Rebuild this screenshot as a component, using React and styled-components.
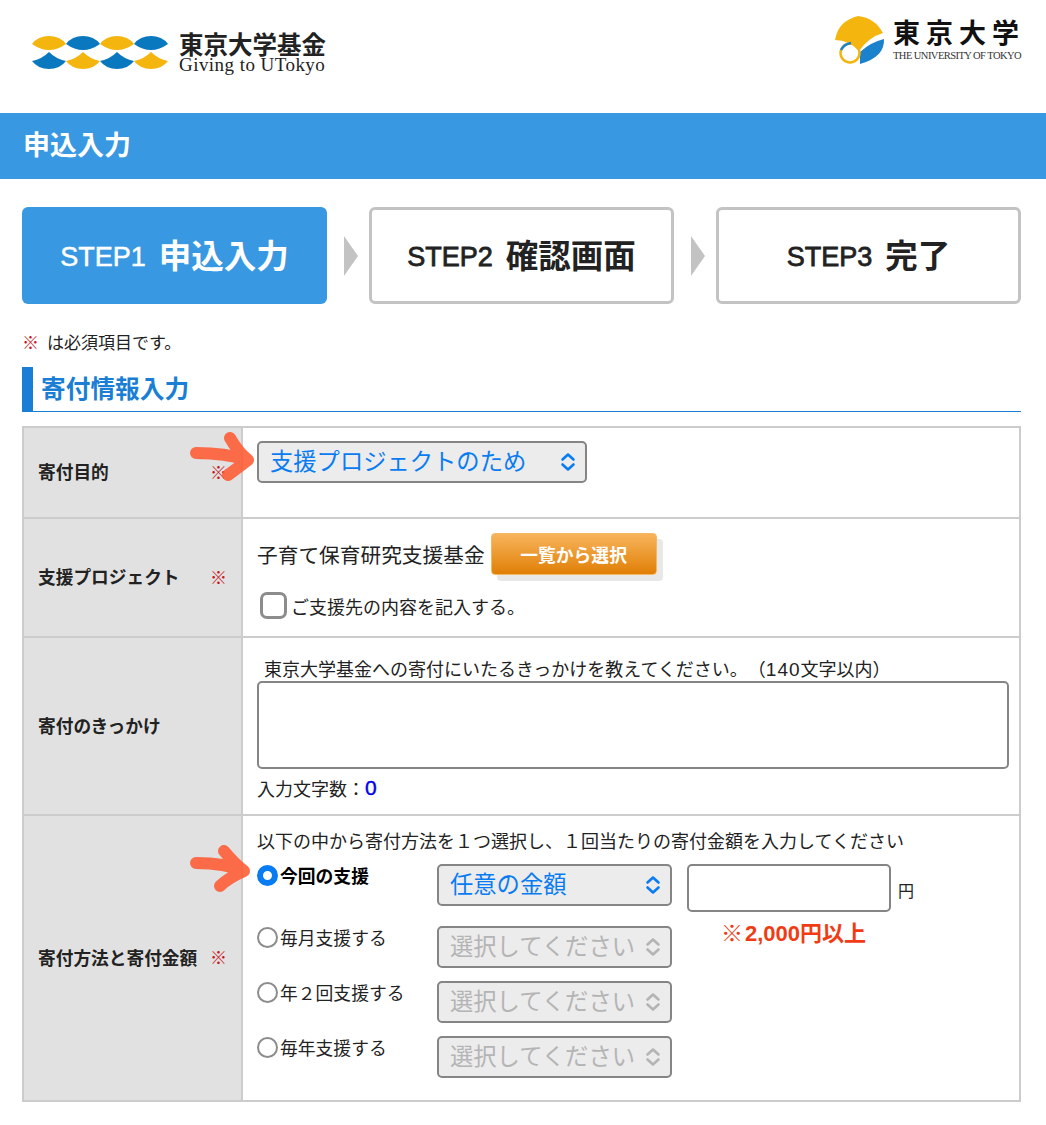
import React from "react";
import styled, { createGlobalStyle } from "styled-components";

const GlobalStyle = createGlobalStyle`
	html, body {
		margin: 0;
		padding: 0;
		background: #fff;
	}
	body {
		font-family: "Liberation Sans", "Noto Sans CJK JP", sans-serif;
		color: #222;
		text-spacing-trim: space-all;
	}
	* {
		box-sizing: border-box;
	}
`;

const Page = styled.div`
	position: relative;
	width: 1046px;
	height: 1125px;
	overflow: hidden;
`;

const Header = styled.header`
	height: 113px;
	display: flex;
	justify-content: space-between;
	align-items: flex-start;
	padding: 15px 25px 0 32px;
`;

const LogoLeft = styled.div`
	display: flex;
	gap: 11px;
	padding-top: 17px;
`;

const LogoWords = styled.div`
	display: flex;
	flex-direction: column;
	gap: 1px;
	color: #222;
`;

const LogoJa = styled.span`
	font-family: "Noto Sans CJK JP", sans-serif;
	font-size: 24.5px;
	font-weight: 700;
	line-height: 24px;
	white-space: nowrap;
`;

const LogoEn = styled.span`
	font-family: "Liberation Serif", serif;
	font-size: 19px;
	letter-spacing: 0.45px;
	line-height: 15px;
	white-space: nowrap;
`;

const LogoRight = styled.div`
	display: flex;
	gap: 8px;
`;

const CrestWords = styled.div`
	display: flex;
	flex-direction: column;
	padding-top: 1px;
	width: 128px;
`;

const CrestJa = styled.span`
	font-family: "Noto Sans CJK JP", sans-serif;
	font-size: 27px;
	font-weight: 700;
	letter-spacing: 6px;
	line-height: 32px;
	color: #111;
	white-space: nowrap;
`;

const CrestEn = styled.span`
	font-family: "Liberation Serif", serif;
	font-size: 10.5px;
	line-height: 12px;
	letter-spacing: -0.55px;
	margin-top: 2px;
	color: #333;
	white-space: nowrap;
`;

const TitleBar = styled.div`
	height: 66px;
	background: #3898e2;
	color: #fff;
	font-family: "Noto Sans CJK JP", sans-serif;
	font-size: 27px;
	font-weight: 700;
	line-height: 62px;
	padding-left: 23px;
`;

const Content = styled.main`
	padding: 28px 25px 0 22px;
`;

const Steps = styled.div`
	display: flex;
	justify-content: space-between;
	align-items: center;
`;

const Step = styled.div`
	width: 305px;
	height: 97px;
	border-radius: 6px;
	display: flex;
	justify-content: center;
	align-items: center;
	gap: 13px;
	background: ${(p) => (p.$active ? "#3898e2" : "#fff")};
	color: ${(p) => (p.$active ? "#fff" : "#222")};
	border: ${(p) => (p.$active ? "none" : "3px solid #c3c3c3")};
`;

const StepNo = styled.span`
	font-size: 27px;
	font-weight: 400;
	-webkit-text-stroke: ${(p) => (p.$active ? 0.5 : 0.8)}px currentColor;
	margin-top: 3px;
`;

const StepName = styled.span`
	font-family: "Noto Sans CJK JP", sans-serif;
	font-size: 32.5px;
	font-weight: 700;
	margin-bottom: 4px;
`;

const StepArrow = styled.div`
	width: 0;
	height: 0;
	margin-left: 6px;
	border-style: solid;
	border-width: 20px 0 20px 14px;
	border-color: transparent transparent transparent #c3c3c3;
`;

const Note = styled.p`
	display: flex;
	gap: 8px;
	margin: 26px 0 0 0;
	height: 24px;
	font-family: "Noto Sans CJK JP", sans-serif;
	font-size: 17px;
	line-height: 24px;
	color: #222;
`;

const Mark = styled.span`
	color: #c8141c;
	font-family: "Noto Sans CJK JP", sans-serif;
	font-size: 17px;
`;

const SectionTitle = styled.h2`
	margin: 13px 0 14px;
	height: 45px;
	border-left: 11px solid #1a7fd4;
	border-bottom: 1px solid #1a7fd4;
	padding-left: 8px;
	color: #1a7fd4;
	font-family: "Noto Sans CJK JP", sans-serif;
	font-size: 24.7px;
	font-weight: 700;
	line-height: 41px;
`;

const FormTable = styled.div`
	display: grid;
	grid-template-columns: 219px 1fr;
	border: 2px solid #ccc;
`;

const Label = styled.div`
	height: ${(p) => p.$h}px;
	background: #e1e1e1;
	border-right: 2px solid #ccc;
	border-bottom: ${(p) => (p.$last ? "none" : "2px solid #ccc")};
	display: flex;
	justify-content: space-between;
	align-items: center;
	padding: 0 14px 3px 14px;
	font-family: "Noto Sans CJK JP", sans-serif;
	font-size: 17.7px;
	font-weight: 700;
	color: #222;
`;

const Field = styled.div`
	height: ${(p) => p.$h}px;
	border-bottom: ${(p) => (p.$last ? "none" : "2px solid #ccc")};
	padding: ${(p) => p.$pad}px 10px 0 14px;
`;

const SelectWrap = styled.div`
	position: relative;
	grid-column: ${(p) => (p.$row ? 2 : "auto")};
	grid-row: ${(p) => p.$row || "auto"};
	width: ${(p) => p.$w}px;
	height: 42px;
`;

const NativeSelect = styled.select`
	appearance: none;
	width: 100%;
	height: 100%;
	border: 2px solid #858585;
	border-radius: 5px;
	background: #ececec;
	padding: 0 0 5px 11px;
	margin: 0;
	font-family: "Noto Sans CJK JP", sans-serif;
	font-size: 23.3px;
	color: ${(p) => (p.disabled ? "#b4b4b4" : "#0a7cf2")};
	opacity: 1;
`;

const SelectIcon = styled.svg`
	position: absolute;
	right: 11px;
	top: 50%;
	transform: translateY(-50%);
	width: 16px;
	height: 20px;
	fill: none;
	stroke: ${(p) => (p.$off ? "#b4b4b4" : "#0a7cf2")};
	stroke-width: 2.6;
	stroke-linecap: round;
	stroke-linejoin: round;
	pointer-events: none;
`;

const Line = styled.div`
	display: flex;
	align-items: center;
	gap: ${(p) => p.$gap || 0}px;
	margin-top: ${(p) => p.$top || 0}px;
`;

const BodyText = styled.span`
	font-family: "Noto Sans CJK JP", sans-serif;
	font-size: ${(p) => p.$size || 18}px;
	color: #222;
	white-space: nowrap;
	margin-left: ${(p) => p.$left || 0}px;
`;

const Digits = styled.span`
	font-family: "Liberation Sans", sans-serif;
	font-size: 19px;
	letter-spacing: 1px;
`;

const PickButton = styled.button`
	width: 166px;
	height: 42px;
	border: 1px solid #f5b860;
	border-radius: 4px;
	background: linear-gradient(#f8b45c, #e07f06);
	box-shadow: 6px 6px 0 #e8e8e8;
	color: #fff;
	font-family: "Noto Sans CJK JP", sans-serif;
	font-size: 17.8px;
	font-weight: 700;
	padding: 0;
`;

const Check = styled.input`
	appearance: none;
	margin: 0 0 0 3px;
	width: 27px;
	height: 27px;
	border: 3px solid #8c8c8c;
	border-radius: 7px;
	background: #fff;
`;

const TextArea = styled.textarea`
	display: block;
	width: 752px;
	height: 88px;
	border: 2px solid #858585;
	border-radius: 5px;
	background: #fff;
	margin: 0;
	resize: none;
`;

const Counter = styled.span`
	color: #0000f0;
	font-size: 21px;
	-webkit-text-stroke: 0.4px currentColor;
`;

const PayGrid = styled.div`
	display: grid;
	grid-template-columns: 180px 235px 15px 204px 30px;
	grid-template-rows: 62px 55px 55px 42px;
	margin-top: 11px;
`;

const RadioLabel = styled.label`
	grid-column: 1;
	grid-row: ${(p) => p.$row};
	display: flex;
	align-items: center;
	height: 22px;
	gap: 2px;
	font-family: "Noto Sans CJK JP", sans-serif;
	font-size: 17.8px;
	font-weight: ${(p) => (p.$on ? 700 : 400)};
	color: ${(p) => (p.$on ? "#000" : "#222")};
`;

const Radio = styled.input`
	appearance: none;
	margin: 0;
	width: 21px;
	height: 21px;
	border-radius: 50%;
	background: #fff;
	border: ${(p) => (p.checked ? "6px solid #0a7cf2" : "2.5px solid #8c8c8c")};
	flex: none;
`;

const AmountInput = styled.input`
	grid-column: 4;
	grid-row: 1;
	width: 204px;
	height: 48px;
	border: 2px solid #858585;
	border-radius: 5px;
	background: #fff;
	margin: 0;
`;

const Yen = styled.span`
	grid-column: 5;
	grid-row: 1;
	align-self: start;
	margin: 14px 0 0 7px;
	font-family: "Noto Sans CJK JP", sans-serif;
	font-size: 16px;
	color: #222;
`;

const MinNote = styled.span`
	grid-column: 4 / 6;
	grid-row: 2;
	display: flex;
	gap: 2px;
	margin: -6px 0 0 34px;
	font-family: "Liberation Sans", "Noto Sans CJK JP", sans-serif;
	font-size: 22px;
	font-weight: 700;
	line-height: 28px;
	color: #f03c14;
	white-space: nowrap;
`;

const ArrowMark = styled.svg`
	position: absolute;
	left: 180px;
	top: ${(p) => p.$top}px;
	width: 85px;
	height: 60px;
	fill: none;
	stroke: #ff5a32;
	stroke-opacity: 0.88;
	stroke-width: 12;
	stroke-linecap: round;
	stroke-linejoin: round;
	pointer-events: none;
`;

const Chevrons = ({ off }) => (
	<SelectIcon viewBox="0 0 16 20" $off={off}>
		<path d="M2.5 7.5 8 2.5l5.5 5M2.5 12.5 8 17.5l5.5-5" />
	</SelectIcon>
);

const Select = ({ w, row, value, disabled }) => (
	<SelectWrap $w={w} $row={row}>
		<NativeSelect disabled={disabled} defaultValue={value}>
			<option>{value}</option>
		</NativeSelect>
		<Chevrons off={disabled} />
	</SelectWrap>
);

const FundMark = () => (
	<svg width="136" height="40" viewBox="0 0 136 40">
		<path fill="#f5b50f" d="M0 12A20 17 0 0 1 34 12Q17 24 0 12Z" />
		<path fill="#0a78be" d="M34 12A20 17 0 0 1 68 12Q51 24 34 12Z" />
		<path fill="#f5b50f" d="M68 12A20 17 0 0 1 102 12Q85 24 68 12Z" />
		<path fill="#0a78be" d="M102 12A20 17 0 0 1 136 12Q119 24 102 12Z" />
		<path fill="#0a78be" d="M17 20Q24 27 34 29A20 17 0 0 1 0 29Q10 27 17 20Z" />
		<path fill="#f5b50f" d="M51 20Q58 27 68 29A20 17 0 0 1 34 29Q44 27 51 20Z" />
		<path fill="#0a78be" d="M85 20Q92 27 102 29A20 17 0 0 1 68 29Q78 27 85 20Z" />
		<path fill="#f5b50f" d="M119 20Q126 27 136 29A20 17 0 0 1 102 29Q112 27 119 20Z" />
	</svg>
);

const UTokyoCrest = () => (
	<svg width="50" height="50" viewBox="0 0 50 50">
		<path fill="#f5b50f" d="M0 25Q3 6 23 1Q40 3 48 18Q34 22 24 36Q14 25 0 25Z" />
		<path fill="#1a82cc" d="M25 37Q36 27 49 24Q50 42 25 49Z" />
		<circle cx="15" cy="38" r="9.5" fill="none" stroke="#f5b50f" strokeWidth="2.5" />
		<path fill="none" stroke="#1a82cc" strokeWidth="2.5" d="M6 35Q9 29 16 28" />
	</svg>
);

export default function App() {
	return (
		<Page>
			<GlobalStyle />
			<Header>
				<LogoLeft>
					<FundMark />
					<LogoWords>
						<LogoJa>東京大学基金</LogoJa>
						<LogoEn>Giving to UTokyo</LogoEn>
					</LogoWords>
				</LogoLeft>
				<LogoRight>
					<UTokyoCrest />
					<CrestWords>
						<CrestJa>東京大学</CrestJa>
						<CrestEn>THE UNIVERSITY OF TOKYO</CrestEn>
					</CrestWords>
				</LogoRight>
			</Header>
			<TitleBar>申込入力</TitleBar>
			<Content>
				<Steps>
					<Step $active>
						<StepNo $active>STEP1</StepNo>
						<StepName>申込入力</StepName>
					</Step>
					<StepArrow />
					<Step>
						<StepNo>STEP2</StepNo>
						<StepName>確認画面</StepName>
					</Step>
					<StepArrow />
					<Step>
						<StepNo>STEP3</StepNo>
						<StepName>完了</StepName>
					</Step>
				</Steps>
				<Note>
					<Mark>※</Mark>
					<span>は必須項目です。</span>
				</Note>
				<SectionTitle>寄付情報入力</SectionTitle>
				<FormTable>
					<Label $h={91}>
						寄付目的
						<Mark>※</Mark>
					</Label>
					<Field $h={91} $pad={13}>
						<Select w={330} value="支援プロジェクトのため" />
					</Field>

					<Label $h={119}>
						支援プロジェクト
						<Mark>※</Mark>
					</Label>
					<Field $h={119} $pad={14}>
						<Line $gap={6}>
							<BodyText $size={20.7}>子育て保育研究支援基金</BodyText>
							<PickButton>一覧から選択</PickButton>
						</Line>
						<Line $top={17} $gap={4}>
							<Check type="checkbox" />
							<BodyText>ご支援先の内容を記入する。</BodyText>
						</Line>
					</Field>

					<Label $h={178}>寄付のきっかけ</Label>
					<Field $h={178} $pad={17}>
						<BodyText $left={7}>
							東京大学基金への寄付にいたるきっかけを教えてください。（<Digits>140</Digits>文字以内）
						</BodyText>
						<TextArea />
						<Line $top={6}>
							<BodyText>入力文字数：</BodyText>
							<Counter>0</Counter>
						</Line>
					</Field>

					<Label $h={284} $last>
						寄付方法と寄付金額
						<Mark>※</Mark>
					</Label>
					<Field $h={284} $pad={11} $last>
						<BodyText>以下の中から寄付方法を１つ選択し、１回当たりの寄付金額を入力してください</BodyText>
						<PayGrid>
							<RadioLabel $on $row={1}>
								<Radio type="radio" name="pay" checked readOnly />
								今回の支援
							</RadioLabel>
							<Select w={235} row={1} value="任意の金額" />
							<AmountInput type="text" />
							<Yen>円</Yen>
							<RadioLabel $row={2}>
								<Radio type="radio" name="pay" readOnly />
								毎月支援する
							</RadioLabel>
							<Select w={235} row={2} value="選択してください" disabled />
							<MinNote>
								<span>※</span>
								<span>2,000円以上</span>
							</MinNote>
							<RadioLabel $row={3}>
								<Radio type="radio" name="pay" readOnly />
								年２回支援する
							</RadioLabel>
							<Select w={235} row={3} value="選択してください" disabled />
							<RadioLabel $row={4}>
								<Radio type="radio" name="pay" readOnly />
								毎年支援する
							</RadioLabel>
							<Select w={235} row={4} value="選択してください" disabled />
						</PayGrid>
					</Field>
				</FormTable>
			</Content>
			<ArrowMark $top={425} viewBox="0 0 85 60">
				<path d="M16 28Q45 28 68 35Q55 45 48 50M50 13Q58 27 68 35" />
			</ArrowMark>
			<ArrowMark $top={838} viewBox="0 0 85 60">
				<path d="M16 25Q45 25 64 33Q48 40 40 48M44 13Q54 25 64 33" />
			</ArrowMark>
		</Page>
	);
}
